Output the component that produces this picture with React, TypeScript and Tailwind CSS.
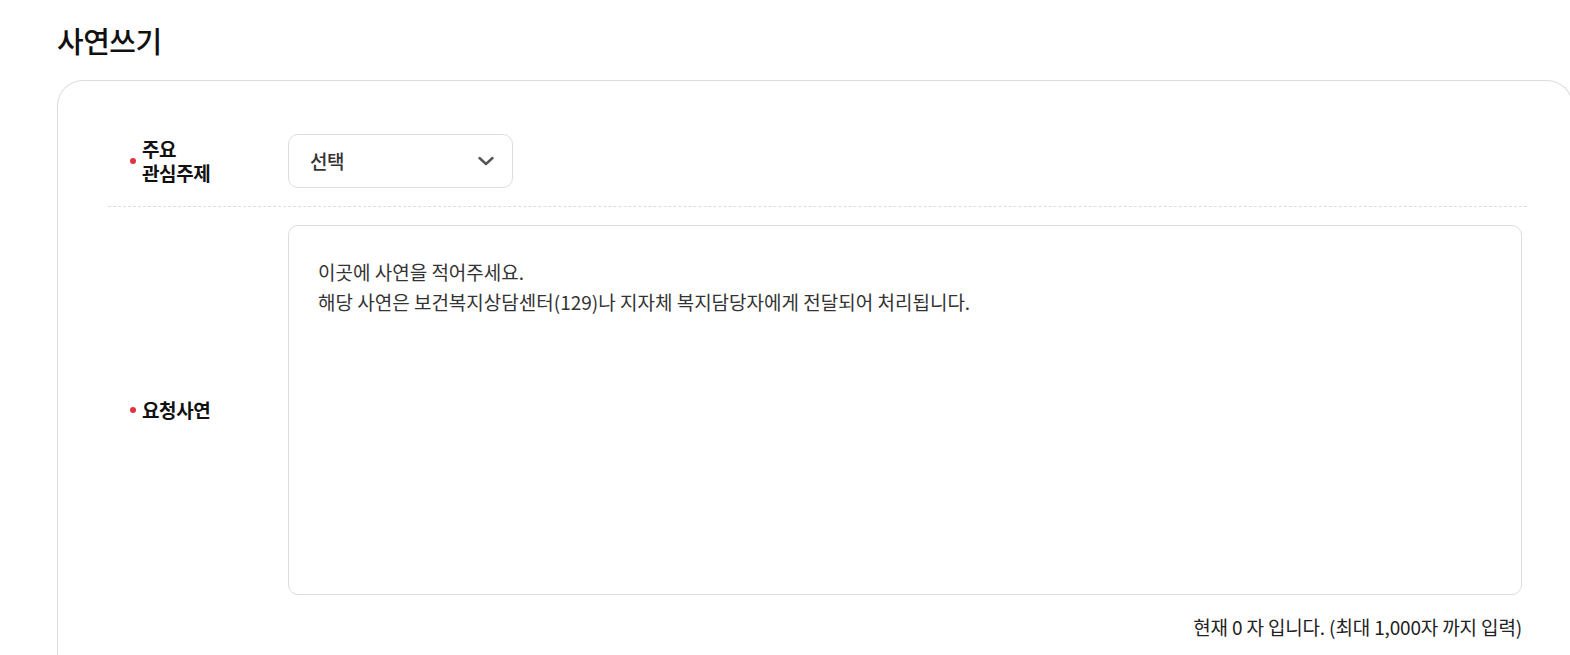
import React from 'react';

const font = { fontFamily: '"Noto Sans CJK KR", "Noto Sans", sans-serif' };

const Bullet: React.FC = () => (
  <span className="mr-[6px] inline-block h-[6px] w-[6px] shrink-0 rounded-full bg-[#e2323f]" />
);

export default function App() {
  return (
    <div className="w-full overflow-hidden bg-white text-[#111]" style={font}>
      <div className="pl-[57px] pt-[20px]">
        <h2 className="text-[29px] leading-[40px] font-medium tracking-[-0.5px] text-[#111]">사연쓰기</h2>

        <div className="mt-[20px] w-[1516px] rounded-tl-[26px] rounded-tr-[26px] border border-b-0 border-[#dddddd] pl-[50px] pr-[45px] pt-[53px] pb-[20px]">
          {/* 주요 관심주제 */}
          <div className="flex items-center border-b border-dashed border-[#dddddd] pb-[18px]">
            <div className="flex w-[180px] items-center pl-[22px]">
              <Bullet />
              <span className="text-[19px] leading-[24px] font-bold tracking-[-0.4px]">
                주요
                <br />
                관심주제
              </span>
            </div>
            <button className="flex h-[54px] w-[225px] items-center justify-between rounded-[10px] border border-[#dddddd] bg-white pl-[21px] pr-[15px] text-[19px] font-medium tracking-[-0.5px] text-[#333]">
              <span>선택</span>
              <svg width="22" height="22" viewBox="0 0 22 22" fill="none">
                <path d="M4.5 8 11 14l6.5-6" stroke="#555" strokeWidth="2.4" strokeLinecap="round" strokeLinejoin="round" />
              </svg>
            </button>
          </div>

          {/* 요청사연 */}
          <div className="flex items-center pt-[18px]">
            <div className="flex w-[180px] items-center pl-[22px]">
              <Bullet />
              <span className="text-[19px] leading-[24px] font-bold tracking-[-0.4px]">요청사연</span>
            </div>
            <textarea
              className="h-[370px] w-[1234px] resize-none rounded-[10px] border border-[#dddddd] px-[29px] pt-[31px] text-[19px] leading-[30px] text-[#333] outline-none placeholder:text-[#333]"
              placeholder={'이곳에 사연을 적어주세요.\n해당 사연은 보건복지상담센터(129)나 지자체 복지담당자에게 전달되어 처리됩니다.'}
            />
          </div>

          <div className="mt-[17px] w-[1414px] text-right text-[19px] leading-[30px] tracking-[-0.15px] text-[#222]">
            현재 0 자 입니다. (최대 1,000자 까지 입력)
          </div>
        </div>
      </div>
    </div>
  );
}
